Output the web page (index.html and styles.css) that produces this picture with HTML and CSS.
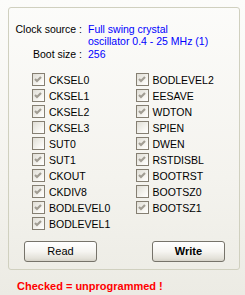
FILE: index.html
```html
<!DOCTYPE html>
<html lang="en">
<head>
  <meta charset="UTF-8" />
  <title>Fuses</title>
  <link rel="stylesheet" href="styles.css">
</head>
<body>
  <div class="group">
    <!-- Resumen -->
    <div class="info">
      <span class="key">Clock source :</span>
      <span class="val">Full swing crystal<br>oscillator 0.4 - 25 MHz (1)</span>
      <span class="key">Boot size :</span>
      <span class="val">256</span>
    </div>

    <!-- Fuses -->
    <div class="checks">
      <div class="col">
        <label class="row"><span class="cb on"><svg viewBox="0 0 11 11"><polyline points="2,5 4,7 8,3" /></svg></span>CKSEL0</label>
        <label class="row"><span class="cb on"><svg viewBox="0 0 11 11"><polyline points="2,5 4,7 8,3" /></svg></span>CKSEL1</label>
        <label class="row"><span class="cb on"><svg viewBox="0 0 11 11"><polyline points="2,5 4,7 8,3" /></svg></span>CKSEL2</label>
        <label class="row"><span class="cb"></span>CKSEL3</label>
        <label class="row"><span class="cb"></span>SUT0</label>
        <label class="row"><span class="cb on"><svg viewBox="0 0 11 11"><polyline points="2,5 4,7 8,3" /></svg></span>SUT1</label>
        <label class="row"><span class="cb on"><svg viewBox="0 0 11 11"><polyline points="2,5 4,7 8,3" /></svg></span>CKOUT</label>
        <label class="row"><span class="cb on"><svg viewBox="0 0 11 11"><polyline points="2,5 4,7 8,3" /></svg></span>CKDIV8</label>
        <label class="row"><span class="cb on"><svg viewBox="0 0 11 11"><polyline points="2,5 4,7 8,3" /></svg></span>BODLEVEL0</label>
        <label class="row"><span class="cb on"><svg viewBox="0 0 11 11"><polyline points="2,5 4,7 8,3" /></svg></span>BODLEVEL1</label>
      </div>
      <div class="col">
        <label class="row"><span class="cb on"><svg viewBox="0 0 11 11"><polyline points="2,5 4,7 8,3" /></svg></span>BODLEVEL2</label>
        <label class="row"><span class="cb on"><svg viewBox="0 0 11 11"><polyline points="2,5 4,7 8,3" /></svg></span>EESAVE</label>
        <label class="row"><span class="cb on"><svg viewBox="0 0 11 11"><polyline points="2,5 4,7 8,3" /></svg></span>WDTON</label>
        <label class="row"><span class="cb"></span>SPIEN</label>
        <label class="row"><span class="cb on"><svg viewBox="0 0 11 11"><polyline points="2,5 4,7 8,3" /></svg></span>DWEN</label>
        <label class="row"><span class="cb on"><svg viewBox="0 0 11 11"><polyline points="2,5 4,7 8,3" /></svg></span>RSTDISBL</label>
        <label class="row"><span class="cb on"><svg viewBox="0 0 11 11"><polyline points="2,5 4,7 8,3" /></svg></span>BOOTRST</label>
        <label class="row"><span class="cb"></span>BOOTSZ0</label>
        <label class="row"><span class="cb on"><svg viewBox="0 0 11 11"><polyline points="2,5 4,7 8,3" /></svg></span>BOOTSZ1</label>
      </div>
    </div>

    <div class="buttons">
      <button type="button" class="btn">Read</button>
      <button type="button" class="btn bold">Write</button>
    </div>
  </div>

  <div class="note">Checked = unprogrammed !</div>
</body>
</html>
```

FILE: styles.css
```css
/* Estilos básicos */
body {
  margin: 0;
  height: 295px;
  font-family: "Liberation Sans", Arial, sans-serif;
  font-size: 10.5px;
  color: #000;
  background: linear-gradient(#fcfcfa, #f4f3ee 60%, #ecebe4);
  overflow: hidden;
}

.group {
  margin: 7px 5px 0 8px;
  height: 246px;
  border: 1px solid #d0d0bf;
  border-radius: 3px;
  padding-top: 15px;
}

.info {
  display: grid;
  grid-template-columns: 73px 1fr;
  column-gap: 6px;
  line-height: 12.3px;
}

.key {
  text-align: right;
}

.val {
  color: #0000ff;
}

.checks {
  display: flex;
  margin-top: 12px;
  padding-left: 23px;
}

.col {
  display: flex;
  flex-direction: column;
  width: 116px;
}

.row {
  display: flex;
  align-items: center;
  height: 16px;
  line-height: 16px;
}

.cb {
  width: 11px;
  height: 11px;
  margin-right: 4px;
  border: 1px solid #857f72;
  background: linear-gradient(135deg, #e0ded6, #f8f7f3 70%, #ffffff);
  flex: none;
}

.cb svg {
  display: block;
  width: 11px;
  height: 11px;
}

.cb polyline {
  fill: none;
  stroke: #a19d93;
  stroke-width: 2.2;
}

.buttons {
  display: flex;
  gap: 55px;
  margin-top: 9px;
  padding-left: 15px;
}

.btn {
  width: 73px;
  height: 21px;
  padding: 0;
  font-family: "Liberation Sans", Arial, sans-serif;
  font-size: 11px;
  color: #000;
  border: 1px solid #76736a;
  border-radius: 3px;
  background: linear-gradient(#ffffff, #f6f5f1 50%, #e4e2da 85%, #d6d3c9);
}

.bold {
  font-weight: bold;
}

.note {
  margin: 10px 0 0 17px;
  font-size: 11px;
  font-weight: bold;
  line-height: 13px;
  color: #ff0000;
}
```
